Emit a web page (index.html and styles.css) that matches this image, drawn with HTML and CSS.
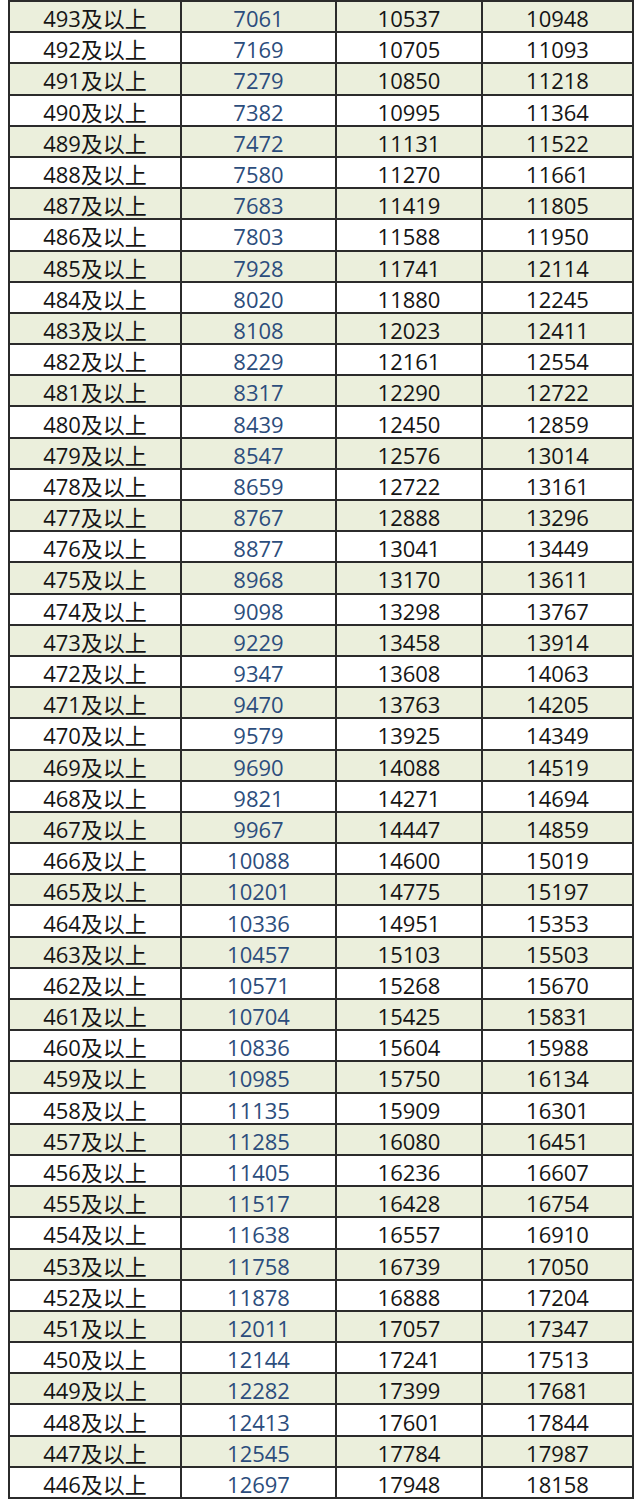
FILE: index.html
```html
<!DOCTYPE html>
<html lang="zh">
<head>
<meta charset="utf-8">
<title>分数段</title>
<link rel="stylesheet" href="styles.css">
</head>
<body>
<table class="score-table">
<colgroup><col class="c1"><col class="c2"><col class="c3"><col class="c4"></colgroup>
<tbody>
<tr><td>493及以上</td><td class="blue">7061</td><td>10537</td><td>10948</td></tr>
<tr><td>492及以上</td><td class="blue">7169</td><td>10705</td><td>11093</td></tr>
<tr><td>491及以上</td><td class="blue">7279</td><td>10850</td><td>11218</td></tr>
<tr><td>490及以上</td><td class="blue">7382</td><td>10995</td><td>11364</td></tr>
<tr><td>489及以上</td><td class="blue">7472</td><td>11131</td><td>11522</td></tr>
<tr><td>488及以上</td><td class="blue">7580</td><td>11270</td><td>11661</td></tr>
<tr><td>487及以上</td><td class="blue">7683</td><td>11419</td><td>11805</td></tr>
<tr><td>486及以上</td><td class="blue">7803</td><td>11588</td><td>11950</td></tr>
<tr><td>485及以上</td><td class="blue">7928</td><td>11741</td><td>12114</td></tr>
<tr><td>484及以上</td><td class="blue">8020</td><td>11880</td><td>12245</td></tr>
<tr><td>483及以上</td><td class="blue">8108</td><td>12023</td><td>12411</td></tr>
<tr><td>482及以上</td><td class="blue">8229</td><td>12161</td><td>12554</td></tr>
<tr><td>481及以上</td><td class="blue">8317</td><td>12290</td><td>12722</td></tr>
<tr><td>480及以上</td><td class="blue">8439</td><td>12450</td><td>12859</td></tr>
<tr><td>479及以上</td><td class="blue">8547</td><td>12576</td><td>13014</td></tr>
<tr><td>478及以上</td><td class="blue">8659</td><td>12722</td><td>13161</td></tr>
<tr><td>477及以上</td><td class="blue">8767</td><td>12888</td><td>13296</td></tr>
<tr><td>476及以上</td><td class="blue">8877</td><td>13041</td><td>13449</td></tr>
<tr><td>475及以上</td><td class="blue">8968</td><td>13170</td><td>13611</td></tr>
<tr><td>474及以上</td><td class="blue">9098</td><td>13298</td><td>13767</td></tr>
<tr><td>473及以上</td><td class="blue">9229</td><td>13458</td><td>13914</td></tr>
<tr><td>472及以上</td><td class="blue">9347</td><td>13608</td><td>14063</td></tr>
<tr><td>471及以上</td><td class="blue">9470</td><td>13763</td><td>14205</td></tr>
<tr><td>470及以上</td><td class="blue">9579</td><td>13925</td><td>14349</td></tr>
<tr><td>469及以上</td><td class="blue">9690</td><td>14088</td><td>14519</td></tr>
<tr><td>468及以上</td><td class="blue">9821</td><td>14271</td><td>14694</td></tr>
<tr><td>467及以上</td><td class="blue">9967</td><td>14447</td><td>14859</td></tr>
<tr><td>466及以上</td><td class="blue">10088</td><td>14600</td><td>15019</td></tr>
<tr><td>465及以上</td><td class="blue">10201</td><td>14775</td><td>15197</td></tr>
<tr><td>464及以上</td><td class="blue">10336</td><td>14951</td><td>15353</td></tr>
<tr><td>463及以上</td><td class="blue">10457</td><td>15103</td><td>15503</td></tr>
<tr><td>462及以上</td><td class="blue">10571</td><td>15268</td><td>15670</td></tr>
<tr><td>461及以上</td><td class="blue">10704</td><td>15425</td><td>15831</td></tr>
<tr><td>460及以上</td><td class="blue">10836</td><td>15604</td><td>15988</td></tr>
<tr><td>459及以上</td><td class="blue">10985</td><td>15750</td><td>16134</td></tr>
<tr><td>458及以上</td><td class="blue">11135</td><td>15909</td><td>16301</td></tr>
<tr><td>457及以上</td><td class="blue">11285</td><td>16080</td><td>16451</td></tr>
<tr><td>456及以上</td><td class="blue">11405</td><td>16236</td><td>16607</td></tr>
<tr><td>455及以上</td><td class="blue">11517</td><td>16428</td><td>16754</td></tr>
<tr><td>454及以上</td><td class="blue">11638</td><td>16557</td><td>16910</td></tr>
<tr><td>453及以上</td><td class="blue">11758</td><td>16739</td><td>17050</td></tr>
<tr><td>452及以上</td><td class="blue">11878</td><td>16888</td><td>17204</td></tr>
<tr><td>451及以上</td><td class="blue">12011</td><td>17057</td><td>17347</td></tr>
<tr><td>450及以上</td><td class="blue">12144</td><td>17241</td><td>17513</td></tr>
<tr><td>449及以上</td><td class="blue">12282</td><td>17399</td><td>17681</td></tr>
<tr><td>448及以上</td><td class="blue">12413</td><td>17601</td><td>17844</td></tr>
<tr><td>447及以上</td><td class="blue">12545</td><td>17784</td><td>17987</td></tr>
<tr><td>446及以上</td><td class="blue">12697</td><td>17948</td><td>18158</td></tr>
</tbody>
</table>
</body>
</html>
```
FILE: styles.css
```css
html, body {
  margin: 0;
  padding: 0;
  background: #ffffff;
}

.score-table {
  margin: 0 0 0 8px;
  border-collapse: collapse;
  table-layout: fixed;
  width: 624px;
  font-family: "Open Sans", "Noto Sans CJK SC", sans-serif;
  font-size: 22px;
  color: #151515;
}

.c1 { width: 172px; }
.c2 { width: 155px; }
.c3 { width: 146px; }
.c4 { width: 151px; }

.score-table td {
  border: 2px solid #2b2b2b;
  height: 31.2px;
  padding: 3px 0 0 0;
  box-sizing: border-box;
  text-align: center;
  vertical-align: middle;
  line-height: 26px;
  white-space: nowrap;
}

.score-table tr:nth-child(odd) td {
  background: #ebefdc;
}

.score-table td.blue {
  color: #2c4d7c;
}
```
